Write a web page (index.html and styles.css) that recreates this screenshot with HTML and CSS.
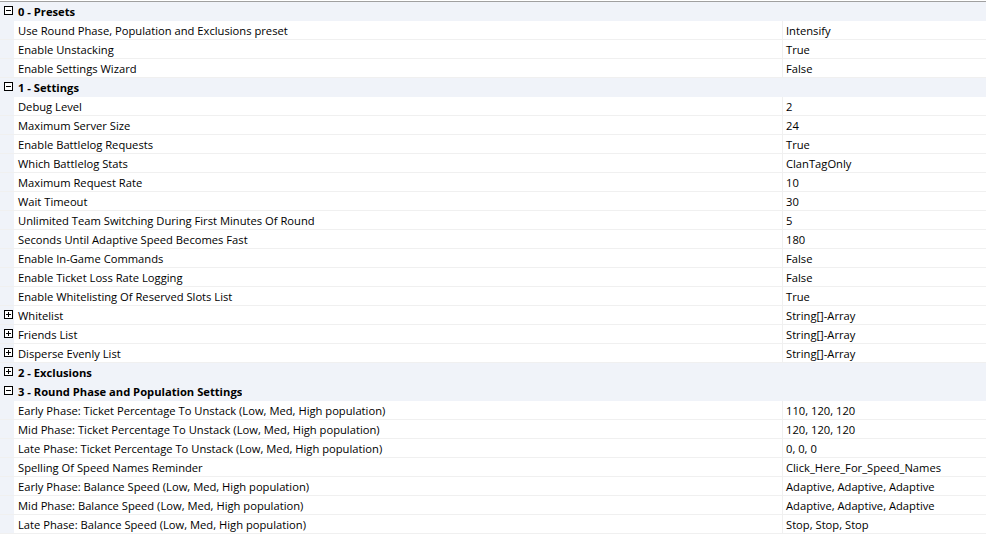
FILE: index.html
```html
<!DOCTYPE html>
<html lang="en">
<head>
  <meta charset="UTF-8" />
  <title>Property Grid</title>
  <link rel="stylesheet" href="styles.css">
</head>
<body>

<div class="grid" id="grid"></div>

<script>
  // [type, name, value] ; type: c = category (open), x = category (closed), p = property, e = expandable property
  const rows = [
    ["c", "0 - Presets"],
    ["p", "Use Round Phase, Population and Exclusions preset", "Intensify"],
    ["p", "Enable Unstacking", "True"],
    ["p", "Enable Settings Wizard", "False"],
    ["c", "1 - Settings"],
    ["p", "Debug Level", "2"],
    ["p", "Maximum Server Size", "24"],
    ["p", "Enable Battlelog Requests", "True"],
    ["p", "Which Battlelog Stats", "ClanTagOnly"],
    ["p", "Maximum Request Rate", "10"],
    ["p", "Wait Timeout", "30"],
    ["p", "Unlimited Team Switching During First Minutes Of Round", "5"],
    ["p", "Seconds Until Adaptive Speed Becomes Fast", "180"],
    ["p", "Enable In-Game Commands", "False"],
    ["p", "Enable Ticket Loss Rate Logging", "False"],
    ["p", "Enable Whitelisting Of Reserved Slots List", "True"],
    ["e", "Whitelist", "String[]-Array"],
    ["e", "Friends List", "String[]-Array"],
    ["e", "Disperse Evenly List", "String[]-Array"],
    ["x", "2 - Exclusions"],
    ["c", "3 - Round Phase and Population Settings"],
    ["p", "Early Phase: Ticket Percentage To Unstack (Low, Med, High population)", "110, 120, 120"],
    ["p", "Mid Phase: Ticket Percentage To Unstack (Low, Med, High population)", "120, 120, 120"],
    ["p", "Late Phase: Ticket Percentage To Unstack (Low, Med, High population)", "0, 0, 0"],
    ["p", "Spelling Of Speed Names Reminder", "Click_Here_For_Speed_Names"],
    ["p", "Early Phase: Balance Speed (Low, Med, High population)", "Adaptive, Adaptive, Adaptive"],
    ["p", "Mid Phase: Balance Speed (Low, Med, High population)", "Adaptive, Adaptive, Adaptive"],
    ["p", "Late Phase: Balance Speed (Low, Med, High population)", "Stop, Stop, Stop"]
  ];

  const grid = document.getElementById("grid");
  rows.forEach(([type, name, value]) => {
    const open = type === "c";
    const box = type === "p" ? "" : `<span class="box ${open ? "minus" : "plus"}"></span>`;
    if (type === "c" || type === "x") {
      grid.innerHTML += `<div class="row cat"><div class="gutter">${box}</div><div class="name">${name}</div></div>`;
    } else {
      grid.innerHTML += `<div class="row"><div class="gutter">${box}</div><div class="name">${name}</div><div class="value">${value}</div></div>`;
    }
  });
</script>

</body>
</html>
```

FILE: styles.css
```css
html, body {
  margin: 0;
  padding: 0;
  background: #fff;
  font-family: "Open Sans", "Segoe UI", sans-serif;
  font-size: 11.2px;
  color: #000;
}
.grid {
  margin-top: 1px;
  border-top: 1px solid #a0a0a0;
}
.row {
  display: flex;
  height: 18px;
  line-height: 20px;
  border-bottom: 1px solid #f0f0f0;
  white-space: nowrap;
  overflow: hidden;
}
.gutter {
  width: 14px;
  flex: none;
  background: #f0f3f9;
  position: relative;
}
.name {
  width: 768px;
  flex: none;
  padding-left: 4px;
  box-sizing: border-box;
  overflow: hidden;
}
.value {
  flex: 1;
  border-left: 1px solid #f0f0f0;
  padding-left: 3px;
}
.cat {
  background: #f0f3f9;
  border-bottom-color: #f0f3f9;
}
.cat .name {
  font-weight: bold;
  width: auto;
}
.box {
  position: absolute;
  left: 4px;
  top: 4px;
  width: 7px;
  height: 7px;
  border: 1px solid #000;
  background: #fff;
}
.box::before {
  content: "";
  position: absolute;
  left: 1px;
  top: 3px;
  width: 5px;
  height: 1px;
  background: #000;
}
.box.plus::after {
  content: "";
  position: absolute;
  left: 3px;
  top: 1px;
  width: 1px;
  height: 5px;
  background: #000;
}
```
